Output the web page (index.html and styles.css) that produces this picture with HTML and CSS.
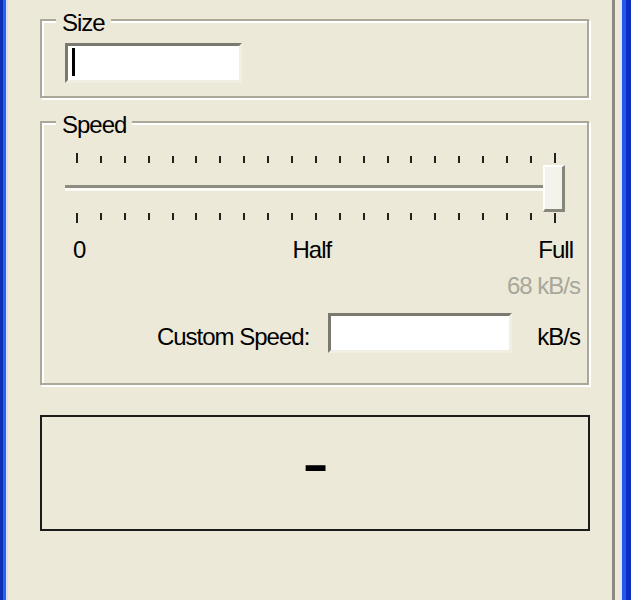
FILE: index.html
```html
<!DOCTYPE html>
<html lang="en">
<head>
  <meta charset="UTF-8">
  <meta name="viewport" content="width=device-width, initial-scale=1.0">
  <title>Transfer Settings</title>
  <link rel="stylesheet" href="styles.css">
</head>
<body>
  <div class="window">
    <div class="frame frame-left"></div>
    <div class="client">
      <!-- Size -->
      <div class="group group-size">
        <div class="group-title">Size</div>
        <div class="edit edit-size"><span class="caret"></span></div>
      </div>

      <!-- Speed -->
      <div class="group group-speed">
        <div class="group-title">Speed</div>
        <div class="slider">
          <div class="ticks ticks-top">
            <i class="tick end"></i><i class="tick"></i><i class="tick"></i><i class="tick"></i><i class="tick"></i>
            <i class="tick"></i><i class="tick"></i><i class="tick"></i><i class="tick"></i><i class="tick"></i>
            <i class="tick"></i><i class="tick"></i><i class="tick"></i><i class="tick"></i><i class="tick"></i>
            <i class="tick"></i><i class="tick"></i><i class="tick"></i><i class="tick"></i><i class="tick"></i>
            <i class="tick end"></i>
          </div>
          <div class="slider-row">
            <div class="track"></div>
            <div class="thumb"></div>
          </div>
          <div class="ticks ticks-bottom">
            <i class="tick end"></i><i class="tick"></i><i class="tick"></i><i class="tick"></i><i class="tick"></i>
            <i class="tick"></i><i class="tick"></i><i class="tick"></i><i class="tick"></i><i class="tick"></i>
            <i class="tick"></i><i class="tick"></i><i class="tick"></i><i class="tick"></i><i class="tick"></i>
            <i class="tick"></i><i class="tick"></i><i class="tick"></i><i class="tick"></i><i class="tick"></i>
            <i class="tick end"></i>
          </div>
        </div>
        <div class="scale-labels">
          <span>0</span>
          <span>Half</span>
          <span>Full</span>
        </div>
        <div class="rate">68 kB/s</div>
        <div class="custom-row">
          <span class="label">Custom Speed:</span>
          <div class="edit edit-speed"></div>
          <span class="label unit">kB/s</span>
        </div>
      </div>

      <!-- Status -->
      <div class="status">
        <span class="status-value">–</span>
      </div>
    </div>
    <div class="frame frame-right"></div>
  </div>
</body>
</html>
```

FILE: styles.css
```css
/* General */
body {
  margin: 0;
  overflow: hidden;
  background: #ece9d8;
  color: #000;
  font-family: "Liberation Sans", Arial, sans-serif;
  font-size: 24px;
  letter-spacing: -1px;
  line-height: 28px;
}

.window {
  display: flex;
  width: 631px;
  height: 600px;
}

/* Window frame */
.frame-left {
  width: 8px;
  background: linear-gradient(to right, #0a2eb4 0 3px, #2a62ee 3px 6px, #d4def4 6px 8px);
}

.frame-right {
  width: 16px;
  background: linear-gradient(to right, #ece9d8 0 5px, #dde4f4 5px 7px, #2458ea 7px 11px, #0a2ec4 11px);
}

.client {
  flex: 1;
  padding-left: 32px;
  border-right: 3px solid #8c8b82;
}

/* Group boxes */
.group {
  box-sizing: border-box;
  width: 549px;
  border: 2px solid #aca899;
  box-shadow: inset 2px 2px 0 #fff, 2px 2px 0 #fff;
}

.group-title {
  width: fit-content;
  margin: -12px 0 0 14px;
  padding: 0 6px;
  background: #ece9d8;
}

.group-size {
  margin-top: 19px;
  padding-bottom: 13px;
}

.group-speed {
  margin-top: 23px;
  padding-bottom: 30px;
}

/* Edit boxes */
.edit {
  box-sizing: border-box;
  height: 40px;
  background: #fff;
  border-style: solid;
  border-width: 3px;
  border-color: #7a796f #f1efe4 #f1efe4 #7a796f;
}

.edit-size {
  width: 177px;
  margin: 6px 0 0 23px;
  padding: 2px 0 0 4px;
}

.caret {
  display: block;
  width: 3px;
  height: 28px;
  background: #000;
}

.edit-speed {
  width: 184px;
}

/* Slider */
.slider {
  width: 500px;
  margin: 14px 0 0 23px;
}

.ticks {
  display: flex;
  justify-content: space-between;
  height: 10px;
  margin: 0 9px 0 11px;
}

.ticks-top {
  align-items: flex-end;
}

.ticks-bottom {
  align-items: flex-start;
}

.tick {
  width: 2px;
  height: 7px;
  background: #222;
}

.tick.end {
  height: 10px;
}

.slider-row {
  display: flex;
  align-items: center;
  height: 50px;
}

.track {
  flex: 1;
  height: 6px;
  background: linear-gradient(#8d8c81 0 3px, #fbfaf6 3px);
}

.thumb {
  box-sizing: border-box;
  width: 22px;
  height: 47px;
  background: #f3f2eb;
  border-style: solid;
  border-width: 2px 3px 3px 2px;
  border-color: #fff #87867b #87867b #fff;
}

/* Labels */
.scale-labels {
  display: flex;
  justify-content: space-between;
  width: 500px;
  margin: 13px 0 0 31px;
}

.rate {
  margin-top: 8px;
  padding-right: 7px;
  text-align: right;
  color: #a8a79b;
}

.custom-row {
  display: flex;
  justify-content: flex-end;
  align-items: center;
  gap: 19px;
  margin-top: 13px;
  padding-right: 7px;
}

.custom-row .label {
  padding-top: 8px;
}

.custom-row .unit {
  margin-left: 6px;
}

/* Status box */
.status {
  box-sizing: border-box;
  display: flex;
  justify-content: center;
  align-items: center;
  width: 550px;
  height: 116px;
  margin-top: 30px;
  border: 2px solid #1b1b1b;
}

.status-value {
  margin-bottom: 14px;
  font-size: 36px;
  font-weight: bold;
  -webkit-text-stroke: 2px #000;
}
```
